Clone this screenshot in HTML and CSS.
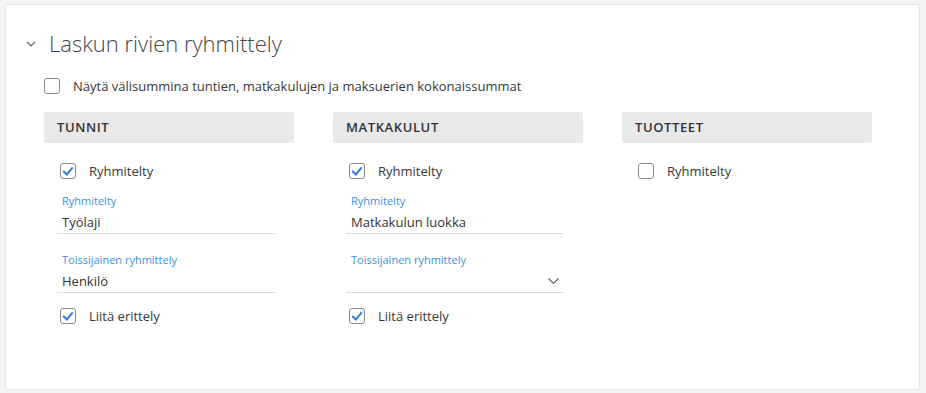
FILE: index.html
```html
<!DOCTYPE html>
<html lang="fi">
<head>
    <meta charset="UTF-8">
    <meta name="viewport" content="width=device-width, initial-scale=1.0">
    <title>Laskun rivien ryhmittely</title>
    <link rel="stylesheet" href="styles.css">
</head>
<body>

<div class="panel">
    <div class="panel-title">
        <svg class="toggle" width="10" height="6" viewBox="0 0 10 6"><path d="M1 1 L5 5 L9 1" fill="none" stroke="#666" stroke-width="1.2"/></svg>
        <h2>Laskun rivien ryhmittely</h2>
    </div>

    <label class="check top-check">
        <span class="box"></span>
        Näytä välisummina tuntien, matkakulujen ja maksuerien kokonaissummat
    </label>

    <div class="columns">
        <div class="column">
            <div class="col-head">TUNNIT</div>
            <label class="check"><span class="box checked"></span>Ryhmitelty</label>
            <div class="field">
                <div class="field-label">Ryhmitelty</div>
                <div class="field-value">Työlaji</div>
            </div>
            <div class="field">
                <div class="field-label">Toissijainen ryhmittely</div>
                <div class="field-value">Henkilö</div>
            </div>
            <label class="check"><span class="box checked"></span>Liitä erittely</label>
        </div>

        <div class="column">
            <div class="col-head">MATKAKULUT</div>
            <label class="check"><span class="box checked"></span>Ryhmitelty</label>
            <div class="field">
                <div class="field-label">Ryhmitelty</div>
                <div class="field-value">Matkakulun luokka</div>
            </div>
            <div class="field">
                <div class="field-label">Toissijainen ryhmittely</div>
                <div class="field-value select">
                    <span></span>
                    <svg width="11" height="6" viewBox="0 0 11 6"><path d="M0.5 0.5 L5.5 5.3 L10.5 0.5" fill="none" stroke="#555" stroke-width="1.1"/></svg>
                </div>
            </div>
            <label class="check"><span class="box checked"></span>Liitä erittely</label>
        </div>

        <div class="column">
            <div class="col-head">TUOTTEET</div>
            <label class="check"><span class="box"></span>Ryhmitelty</label>
        </div>
    </div>
</div>

</body>
</html>
```

FILE: styles.css
```css
body {
    margin: 0;
    background-color: #f4f4f4;
    font-family: "Open Sans", Arial, sans-serif;
    color: #333;
}
.panel {
    margin: 4px 6px 0 5px;
    height: 386px;
    box-sizing: border-box;
    padding: 23px 0 0 21px;
    background-color: #fff;
    border: 1px solid #e6e6e6;
    border-radius: 3px;
}
.panel-title {
    display: flex;
    align-items: center;
    height: 30px;
}
.toggle {
    margin: 2px 13px 0 -1px;
}
.panel-title h2 {
    margin: 0;
    font-size: 22px;
    font-weight: 300;
    color: #444;
    line-height: 30px;
}
.check {
    display: flex;
    align-items: center;
    font-size: 13px;
    height: 16px;
    color: #383838;
}
.box {
    width: 14px;
    height: 14px;
    border: 1px solid #8a8a8a;
    border-radius: 3px;
    margin-right: 13px;
    flex-shrink: 0;
    position: relative;
}
.box.checked::after {
    content: "";
    position: absolute;
    left: 4px;
    top: 1px;
    width: 4px;
    height: 8px;
    border: solid #2f7fd8;
    border-width: 0 2px 2px 0;
    transform: rotate(40deg);
}
.top-check {
    margin: 20px 0 0 17px;
}
.columns {
    display: flex;
    gap: 39px;
    margin: 18px 0 0 17px;
}
.column {
    width: 250px;
}
.col-head {
    height: 31px;
    line-height: 31px;
    background-color: #e9e9e9;
    border-radius: 2px;
    padding-left: 13px;
    font-size: 13px;
    font-weight: 600;
    letter-spacing: 0.6px;
    color: #333;
}
.column .check {
    margin: 20px 0 0 16px;
}
.field {
    width: 218px;
    margin: 15px 0 0 13px;
    padding-left: 5px;
    box-sizing: border-box;
    border-bottom: 1px solid #dcdcdc;
}
.field + .field {
    margin-top: 19px;
}
.field + .check {
    margin-top: 15px;
}
.field-label {
    font-size: 11px;
    line-height: 14px;
    color: #3d8fe0;
}
.field-value {
    margin-top: 4px;
    font-size: 13px;
    line-height: 20px;
    padding-bottom: 1px;
    color: #333;
}
.select {
    display: flex;
    justify-content: space-between;
    align-items: center;
    height: 20px;
    padding-right: 5px;
}
```
